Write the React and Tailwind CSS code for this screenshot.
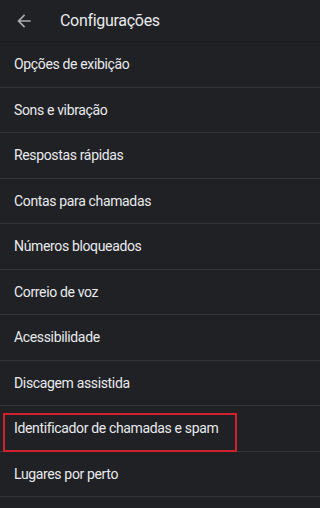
const items = [
  'Opções de exibição',
  'Sons e vibração',
  'Respostas rápidas',
  'Contas para chamadas',
  'Números bloqueados',
  'Correio de voz',
  'Acessibilidade',
  'Discagem assistida',
  'Identificador de chamadas e spam',
  'Lugares por perto',
]

function BackIcon() {
  return (
    <svg width="20" height="20" viewBox="0 0 24 24" className="fill-[#a8abb0]">
      <path d="M20 11H7.83l5.59-5.59L12 4l-8 8 8 8 1.41-1.41L7.83 13H20v-2z" />
    </svg>
  )
}

export default function App() {
  return (
    <div className="w-full h-[508px] overflow-hidden bg-[#202124] text-[#e8eaed] font-['Roboto',sans-serif]">
      <div className="h-[42px] flex items-center border-b border-[#1a1b1d]">
        <div className="w-[60px] pl-[14px] flex items-center">
          <BackIcon />
        </div>
        <span className="text-[16px] leading-none tracking-[-0.3px]">Configurações</span>
      </div>
      {items.map((label, i) => (
        <div key={label} className="relative h-[45.5px] flex items-center px-[14px] border-b border-[#34353a]">
          <span className="text-[14px] leading-none tracking-[-0.35px]">{label}</span>
          {i === 8 && (
            <div className="absolute left-[3px] top-[7px] w-[234px] h-[39px] border-2 border-[#d0202e]" />
          )}
        </div>
      ))}
    </div>
  )
}
